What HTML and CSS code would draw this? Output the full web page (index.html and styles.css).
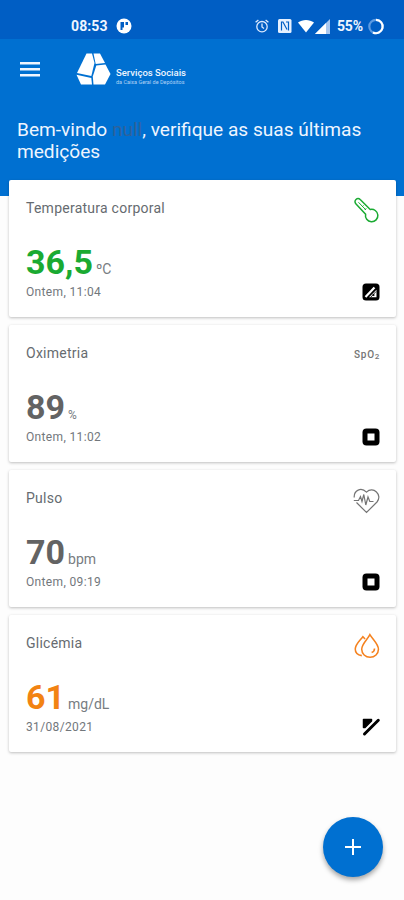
FILE: index.html
```
<!DOCTYPE html>
<html lang="pt">
<head>
  <meta charset="UTF-8">
  <title>Serviços Sociais</title>
  <link rel="stylesheet" href="styles.css">
</head>
<body>

  <header class="header">
    <div class="status-bar">
      <div class="status-left">
        <span class="clock">08:53</span>
        <svg width="16" height="16" viewBox="0 0 16 16">
          <circle cx="8" cy="8" r="7.5" fill="#fff"/>
          <path d="M4.500 12V4H8v5.500H6.500V12zM9.500 4H12v3H9.500z" fill="#005ec4"/>
        </svg>
      </div>
      <div class="status-right">
        <svg class="alarm" width="14" height="14" viewBox="0 0 14 14" fill="none" stroke="#dceaff" stroke-width="1.3">
          <circle cx="7" cy="7.7" r="5.2"/>
          <path d="M7 4.5v3.4l2 1.5M.6 3.2 3.4.9M13.4 3.2 10.6.9"/>
        </svg>
        <svg class="nfc" width="14" height="14" viewBox="0 0 14 14">
          <rect width="13.5" height="14" rx="1.5" fill="#e6f0ff"/>
          <path d="M3.500 11.500V3H5l4 7.500M8 3h2.500v8.500" fill="none" stroke="#005ec4" stroke-width="1.200"/>
        </svg>
        <svg class="wifi" width="16" height="14" viewBox="0 0 16 14">
          <path d="M0 3.5C4.500 0 11.500 0 16 3.500L8 13.500z" fill="#fff"/>
        </svg>
        <svg class="signal" width="15" height="15" viewBox="0 0 15 15">
          <path d="M0 15 15 0v15z" fill="#a9c8f0"/>
          <path d="M0 15 11 4v11z" fill="#fff"/>
        </svg>
        <span class="battery">55%</span>
        <svg width="16" height="17" viewBox="0 0 16 17" fill="none" stroke-width="2.200">
          <circle cx="8" cy="8.500" r="6.700" stroke="#5d9be2"/>
          <path d="M8 1.800a6.700 6.700 0 1 1-3 12.700" stroke="#fff"/>
        </svg>
      </div>
    </div>

    <div class="toolbar">
      <svg class="menu" width="20" height="15" viewBox="0 0 20 15" fill="#f0f6ff">
        <path d="M0 0h20v2.500H0zM0 6h20v2.500H0zM0 12h20v2.500H0z"/>
      </svg>
      <svg class="logo" width="35" height="32" viewBox="0 0 35 32" fill="#fff">
        <path d="M10.500.5H16l2.500 9.500-3.200 13L1 20z"/>
        <path d="M17.500.5H24l5 9.500-9.300 1z"/>
        <path d="M20.300 12.500 29.500 11.500 34.500 21 29 31.500H17.500L16.800 23.500z"/>
        <path d="M.5 21.700 15.300 25l.7 6.500H5z"/>
      </svg>
      <div class="brand">
        <div class="brand-name">Serviços Sociais</div>
        <div class="brand-sub">da Caixa Geral de Depósitos</div>
      </div>
    </div>

    <h1>Bem-vindo <span class="user">null</span>, verifique as suas últimas medições</h1>
  </header>

  <main class="cards">
    <section class="card">
      <div class="info">
        <h2>Temperatura corporal</h2>
        <div class="value green"><b>36,5</b><span class="unit">ºC</span></div>
        <div class="date">Ontem, 11:04</div>
      </div>
      <div class="icons">
        <svg width="26" height="26" viewBox="0 0 26 26" fill="none" stroke="#1aaa32" stroke-width="1.500">
          <path d="M1.800 5.700 11.600 16.200a6.200 6.200 0 1 0 4.600-4.700L6.200 1.600a3 3 0 0 0-4.400 4.100z"/>
          <path d="M4.500 4.300 12 12M9.500 7.500l-1.500 1.500M12.300 10.300l-1.500 1.500" stroke-width="1"/>
        </svg>
        <svg width="18" height="18" viewBox="0 0 18 18">
          <rect x=".5" y=".5" width="17" height="17" rx="3.500"/>
          <path d="M3.500 14 12.500 4.500" stroke="#fff" stroke-width="2.200"/>
          <path d="M7 14.300 14.500 6.700v7.600z" fill="#fff"/>
          <path d="M8.500 14.500 14 8.500" stroke="#000" stroke-width=".8"/>
          <circle cx="11.500" cy="12" r="1.100"/>
        </svg>
      </div>
    </section>

    <section class="card">
      <div class="info">
        <h2>Oximetria</h2>
        <div class="value"><b>89</b><span class="unit small">%</span></div>
        <div class="date">Ontem, 11:02</div>
      </div>
      <div class="icons">
        <div class="spo2">SpO<span class="two">2</span></div>
        <svg width="18" height="18" viewBox="0 0 18 18">
          <rect x=".5" y=".5" width="17" height="17" rx="4"/>
          <rect x="5.500" y="5.500" width="7" height="7" fill="#fff"/>
        </svg>
      </div>
    </section>

    <section class="card">
      <div class="info">
        <h2>Pulso</h2>
        <div class="value"><b>70</b><span class="unit">bpm</span></div>
        <div class="date">Ontem, 09:19</div>
      </div>
      <div class="icons">
        <svg width="27" height="26" viewBox="0 0 27 26" fill="none" stroke="#747474" stroke-width="1.200">
          <path d="M3.500 14.500 13.500 24.500 24 14C30 7 20-2.500 13.500 4.200 8-1.500.8 2.500 1.200 9.500"/>
          <path d="M.8 12.500h4.700l2-4 1.500 5L10.800 6.500 12.800 17l2.200-8 1.800 4.500h3.700"/>
        </svg>
        <svg width="18" height="18" viewBox="0 0 18 18">
          <rect x=".5" y=".5" width="17" height="17" rx="4"/>
          <rect x="5.500" y="5.500" width="7" height="7" fill="#fff"/>
        </svg>
      </div>
    </section>

    <section class="card">
      <div class="info">
        <h2>Glicémia</h2>
        <div class="value orange"><b>61</b><span class="unit">mg/dL</span></div>
        <div class="date">31/08/2021</div>
      </div>
      <div class="icons">
        <svg width="26" height="26" viewBox="0 0 27 26" fill="none" stroke="#f5821f" stroke-width="1.600">
          <path d="M16.500 1.200C13.500 7 8 11 8 16.500a8.700 8.200 0 0 0 17.400 0C25.400 11 20 7 16.500 1.200z"/>
          <path d="M11.500 5.800 9.200 3.400C5.500 8 1.300 11.500 1.300 16.200c0 3.800 2.700 6.300 6.800 6.800"/>
          <path d="M21.300 15.500c0 2.200-1 3.600-3 4.300"/>
        </svg>
        <svg width="18" height="18" viewBox="0 0 18 18">
          <path d="M1.500 1.500H9.500V3L3 9.500H1.500z" stroke="#000" stroke-width="1.500" stroke-linejoin="round"/>
          <path d="M2.500 16 16.300 2.300" stroke="#000" stroke-width="3" stroke-linecap="round"/>
        </svg>
      </div>
    </section>
  </main>

  <button class="fab" type="button">
    <svg width="16" height="16" viewBox="0 0 16 16">
      <path d="M8 0v16M0 8h16" stroke="#fff" stroke-width="2"/>
    </svg>
  </button>

</body>
</html>
```
FILE: styles.css
```
* {
  box-sizing: border-box;
}

body {
  font-family: Roboto, sans-serif;
  background-color: #fdfdfd;
  margin: 0;
  height: 900px;
  overflow: hidden;
}

svg {
  display: block;
  flex: none;
  overflow: visible;
}

.header {
  height: 196px;
  background-color: #0070d1;
  color: #eef5ff;
}

.status-bar {
  height: 39px;
  padding: 13px 20px 0 71px;
  background-color: #005ec4;
  display: flex;
  justify-content: space-between;
}

.status-left,
.status-right {
  display: flex;
  align-items: center;
  height: 26px;
}

.status-left {
  gap: 8px;
}

.clock,
.battery {
  font-size: 14px;
  font-weight: bold;
}

.clock {
  letter-spacing: 0.1px;
}

.alarm {
  margin-right: 9px;
}

.nfc {
  margin-right: 6px;
}

.wifi {
  margin-right: 1px;
}

.signal {
  margin-right: 7px;
}

.battery {
  margin-right: 5px;
  letter-spacing: -0.1px;
}

.toolbar {
  height: 61px;
  padding: 14px 20px 0;
  display: flex;
}

.menu {
  margin: 9px 36px 0 0;
}

.logo {
  margin-right: 5px;
}

.brand {
  padding-top: 14px;
  white-space: nowrap;
}

.brand-name {
  font-size: 9.5px;
  line-height: 12px;
  font-weight: 500;
}

.brand-sub {
  font-size: 5.5px;
  line-height: 7px;
  color: #b0d2f5;
}

h1 {
  margin: 0;
  padding: 19px 17px 0;
  font-size: 19.1px;
  line-height: 22px;
  font-weight: normal;
}

.user {
  color: #2f629a;
}

.cards {
  margin: -16px 8px 0 9px;
  display: flex;
  flex-direction: column;
  gap: 8px;
}

.card {
  height: 137px;
  padding: 18px 16px 16px 17px;
  background-color: #fff;
  border-radius: 2px;
  box-shadow: 0 1px 3px rgba(0,0,0,0.25);
  display: flex;
  justify-content: space-between;
}

h2 {
  margin: 0;
  font-size: 14px;
  line-height: 21px;
  font-weight: normal;
  letter-spacing: 0.25px;
  color: #666b70;
}

.value {
  margin-top: 22px;
  height: 42px;
  line-height: 42px;
  display: flex;
  align-items: baseline;
  color: #636363;
}

.value b {
  font-size: 34px;
  font-weight: bold;
}

.green b {
  color: #1aaa32;
}

.orange b {
  color: #f28313;
}

.unit {
  margin-left: 3px;
  font-size: 14px;
  color: #777c81;
}

.small {
  font-size: 12px;
}

.date {
  font-size: 12px;
  line-height: 18px;
  letter-spacing: 0.35px;
  color: #72777c;
}

.icons {
  display: flex;
  flex-direction: column;
  justify-content: space-between;
  align-items: flex-end;
}

.spo2 {
  display: flex;
  font-size: 10px;
  line-height: 24px;
  font-weight: 500;
  letter-spacing: 0.7px;
  color: #747474;
}

.two {
  font-size: 8px;
  padding-top: 2px;
}

/* floating add button */
.fab {
  position: absolute;
  left: 323px;
  top: 817px;
  width: 60px;
  height: 60px;
  padding: 0;
  border: 0;
  border-radius: 50%;
  background-color: #0070d1;
  box-shadow: 0 3px 5px rgba(0,0,0,0.35);
  display: flex;
  align-items: center;
  justify-content: center;
}
```
